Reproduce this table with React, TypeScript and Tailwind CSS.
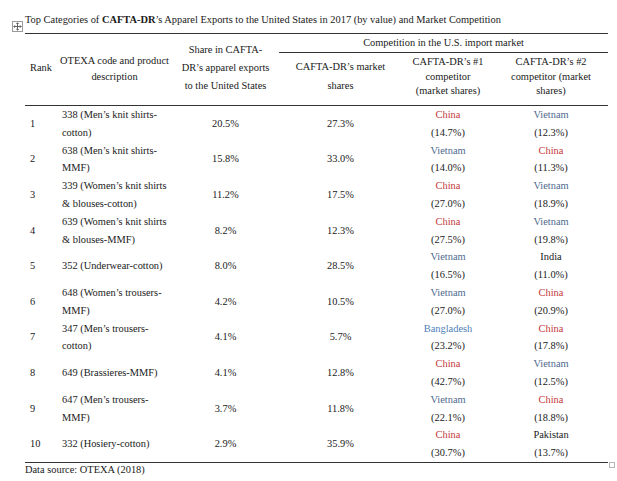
import React from "react";

type Comp = { name: string; color: string; share: string };
type Row = {
  rank: string;
  desc: React.ReactNode;
  share: string;
  mkt: string;
  c1: Comp;
  c2: Comp;
};

const RED = "text-[#c4393b]";
const BLUE = "text-[#4f6a8f]";
const LBLUE = "text-[#4f7fb8]";
const BLACK = "text-[#1a1a1a]";

const rows: Row[] = [
  { rank: "1", desc: <>338 (Men’s knit shirts-<br />cotton)</>, share: "20.5%", mkt: "27.3%", c1: { name: "China", color: RED, share: "(14.7%)" }, c2: { name: "Vietnam", color: BLUE, share: "(12.3%)" } },
  { rank: "2", desc: <>638 (Men’s knit shirts-<br />MMF)</>, share: "15.8%", mkt: "33.0%", c1: { name: "Vietnam", color: BLUE, share: "(14.0%)" }, c2: { name: "China", color: RED, share: "(11.3%)" } },
  { rank: "3", desc: <>339 (Women’s knit shirts<br />&amp; blouses-cotton)</>, share: "11.2%", mkt: "17.5%", c1: { name: "China", color: RED, share: "(27.0%)" }, c2: { name: "Vietnam", color: BLUE, share: "(18.9%)" } },
  { rank: "4", desc: <>639 (Women’s knit shirts<br />&amp; blouses-MMF)</>, share: "8.2%", mkt: "12.3%", c1: { name: "China", color: RED, share: "(27.5%)" }, c2: { name: "Vietnam", color: BLUE, share: "(19.8%)" } },
  { rank: "5", desc: <>352 (Underwear-cotton)</>, share: "8.0%", mkt: "28.5%", c1: { name: "Vietnam", color: BLUE, share: "(16.5%)" }, c2: { name: "India", color: BLACK, share: "(11.0%)" } },
  { rank: "6", desc: <>648 (Women’s trousers-<br />MMF)</>, share: "4.2%", mkt: "10.5%", c1: { name: "Vietnam", color: BLUE, share: "(27.0%)" }, c2: { name: "China", color: RED, share: "(20.9%)" } },
  { rank: "7", desc: <>347 (Men’s trousers-<br />cotton)</>, share: "4.1%", mkt: "5.7%", c1: { name: "Bangladesh", color: LBLUE, share: "(23.2%)" }, c2: { name: "China", color: RED, share: "(17.8%)" } },
  { rank: "8", desc: <>649 (Brassieres-MMF)</>, share: "4.1%", mkt: "12.8%", c1: { name: "China", color: RED, share: "(42.7%)" }, c2: { name: "Vietnam", color: BLUE, share: "(12.5%)" } },
  { rank: "9", desc: <>647 (Men’s trousers-<br />MMF)</>, share: "3.7%", mkt: "11.8%", c1: { name: "Vietnam", color: BLUE, share: "(22.1%)" }, c2: { name: "China", color: RED, share: "(18.8%)" } },
  { rank: "10", desc: <>332 (Hosiery-cotton)</>, share: "2.9%", mkt: "35.9%", c1: { name: "China", color: RED, share: "(30.7%)" }, c2: { name: "Pakistan", color: BLACK, share: "(13.7%)" } },
];

function CompCell({ c }: { c: Comp }) {
  return (
    <td className="p-0 text-center align-middle whitespace-nowrap">
      <div className={c.color}>{c.name}</div>
      <div>{c.share}</div>
    </td>
  );
}

export default function App() {
  return (
    <div className="relative w-[617px] h-[481px] bg-white text-[#1a1a1a] text-[10.4px] font-['Liberation_Serif','Times_New_Roman',serif]">
      {/* move handle */}
      <div className="absolute left-[12px] top-[21px] w-[11px] h-[11px] border border-[#9a9a9a] bg-white flex items-center justify-center">
        <svg width="9" height="9" viewBox="0 0 9 9" fill="none" stroke="#555" strokeWidth="0.9">
          <line x1="4.5" y1="0.8" x2="4.5" y2="8.2" />
          <line x1="0.8" y1="4.5" x2="8.2" y2="4.5" />
          <polyline points="3.3,2 4.5,0.8 5.7,2" />
          <polyline points="3.3,7 4.5,8.2 5.7,7" />
          <polyline points="2,3.3 0.8,4.5 2,5.7" />
          <polyline points="7,3.3 8.2,4.5 7,5.7" />
        </svg>
      </div>

      <div className="pl-[25px] pt-[11px] w-[608px]">
        <div className="leading-[18px] h-[22px] whitespace-nowrap">
          Top Categories of <b>CAFTA-DR</b>’s Apparel Exports to the United States in 2017 (by value) and Market Competition
        </div>
        <table className="w-[583px] table-fixed border-collapse font-['Liberation_Serif','Times_New_Roman',serif]">
          <colgroup>
            <col className="w-[32px]" />
            <col className="w-[115px]" />
            <col className="w-[107px]" />
            <col className="w-[123px]" />
            <col className="w-[92px]" />
            <col className="w-[114px]" />
          </colgroup>
          <thead>
            <tr className="h-[19px] border-t border-[#333]">
              <th rowSpan={2} className="font-normal text-left pl-[5px] pb-[3px] align-middle leading-[18px]">Rank</th>
              <th rowSpan={2} className="font-normal text-center pb-[2px] align-middle leading-[16px] whitespace-nowrap">
                OTEXA code and product<br />description
              </th>
              <th rowSpan={2} className="font-normal text-center pb-[3px] align-middle leading-[18px] whitespace-nowrap">
                Share in CAFTA-<br />DR’s apparel exports<br />to the United States
              </th>
              <th colSpan={3} className="font-normal text-center align-middle leading-[18px] border-b border-[#333] p-0">
                Competition in the U.S. import market
              </th>
            </tr>
            <tr className="h-[53px] border-b border-[#333]">
              <th className="font-normal text-center align-middle leading-[19px] pb-[6px] whitespace-nowrap">
                CAFTA-DR’s market<br />shares
              </th>
              <th className="font-normal text-center align-middle leading-[14.5px] pb-[4px] whitespace-nowrap">
                CAFTA-DR’s #1<br />competitor<br />(market shares)
              </th>
              <th className="font-normal text-center align-middle leading-[14.5px] pb-[4px] whitespace-nowrap">
                CAFTA-DR’s #2<br />competitor (market<br />shares)
              </th>
            </tr>
          </thead>
          <tbody className="leading-[17.8px]">
            {rows.map((r) => (
              <tr key={r.rank} className={`h-[35.6px] ${r.rank === "10" ? "border-b border-[#333]" : ""}`}>
                <td className="pl-[5px] align-middle">{r.rank}</td>
                <td className="pl-[5px] align-middle whitespace-nowrap">{r.desc}</td>
                <td className="text-center align-middle">{r.share}</td>
                <td className="text-center align-middle">{r.mkt}</td>
                <CompCell c={r.c1} />
                <CompCell c={r.c2} />
              </tr>
            ))}
          </tbody>
        </table>
        <div className="leading-[14px] whitespace-nowrap">Data source: OTEXA (2018)</div>
      </div>

      {/* resize handle */}
      <div className="absolute left-[609px] top-[462px] w-[6px] h-[6px] border border-[#b5b5b5] bg-white" />
    </div>
  );
}
